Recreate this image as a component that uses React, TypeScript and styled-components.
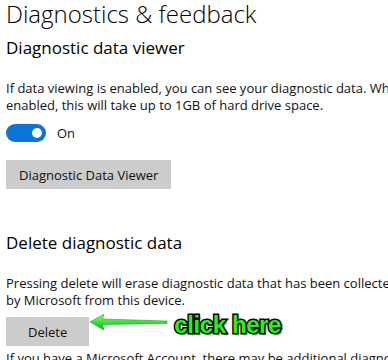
import React from "react";
import styled, { createGlobalStyle } from "styled-components";

const GlobalStyle = createGlobalStyle`
  html, body {
    margin: 0;
    overflow: hidden;
    background: #ffffff;
  }
  body {
    font-family: "Open Sans", "Noto Sans", sans-serif;
    color: #111111;
  }
`;

const Page = styled.div`
  display: flex;
  flex-flow: column nowrap;
  align-items: flex-start;
  padding-left: 6px;
  width: 388px;
  box-sizing: border-box;

  & > * {
    flex-shrink: 0;
  }
`;

const PageTitle = styled.h1`
  margin: 0;
  font-size: 24px;
  font-weight: 300;
  line-height: 28px;
  color: #000;
  white-space: nowrap;
`;

const SectionTitle = styled.h2<{ $top: number }>`
  margin: ${(p) => p.$top}px 0 0;
  font-size: 17px;
  font-weight: 400;
  line-height: 22px;
  color: #000;
  white-space: nowrap;
`;

const Paragraph = styled.p<{ $top: number }>`
  margin: ${(p) => p.$top}px 0 0;
  font-size: 13px;
  line-height: 17px;
  white-space: nowrap;
`;

const ToggleRow = styled.div`
  display: flex;
  flex-flow: row nowrap;
  align-items: center;
  gap: 11px;
  margin-top: 10px;
  font-size: 13px;
  line-height: 18px;
`;

const Toggle = styled.div`
  display: flex;
  align-items: center;
  justify-content: flex-end;
  width: 40px;
  height: 18px;
  padding: 0 4px;
  box-sizing: border-box;
  border-radius: 9px;
  background: #0a74d8;
`;

const Knob = styled.span`
  width: 10px;
  height: 10px;
  border-radius: 50%;
  background: #fff;
`;

const GreyButton = styled.button<{ $top: number; $pad: number }>`
  display: flex;
  align-items: center;
  flex-shrink: 0;
  box-sizing: border-box;
  margin: ${(p) => p.$top}px 0 0;
  height: 29px;
  padding: 0 ${(p) => p.$pad}px;
  border: none;
  background: #cccccc;
  font-family: inherit;
  font-size: 13px;
  color: #111;
  white-space: nowrap;
`;

const DeleteRow = styled.div`
  display: flex;
  flex-flow: row nowrap;
  align-items: flex-start;
  margin-top: 8px;
`;

const Callout = styled.div`
  display: flex;
  flex-flow: row nowrap;
  align-items: center;
  gap: 4px;
  margin-top: -6px;
  margin-left: 1px;
`;

const Arrow = styled.svg`
  margin-bottom: 6px;
  flex: none;
`;

const ClickHere = styled.span`
  font-family: "Liberation Sans", Arial, sans-serif;
  font-weight: 700;
  font-size: 24px;
  line-height: 28px;
  letter-spacing: -0.4px;
  color: #22f51a;
  -webkit-text-stroke: 3px #000;
  paint-order: stroke fill;
  text-shadow: 2px 2px 2px rgba(0, 0, 0, 0.55);
  white-space: nowrap;
`;

function GreenArrow() {
  return (
    <Arrow width="80" height="18" viewBox="0 0 80 18">
      <defs>
        <linearGradient id="arrowFill" x1="0" y1="0" x2="0" y2="1">
          <stop offset="0" stopColor="#8bff74" />
          <stop offset="0.5" stopColor="#33e833" />
          <stop offset="1" stopColor="#14ad14" />
        </linearGradient>
      </defs>
      <polygon
        points="0,9 14,1 12.5,6 77,8 77,10.5 12.5,11.5 14,17"
        fill="url(#arrowFill)"
        stroke="#129312"
        strokeWidth="0.5"
        strokeLinejoin="round"
      />
    </Arrow>
  );
}

export default function App() {
  return (
    <>
      <GlobalStyle />
      <Page>
        <PageTitle>Diagnostics &amp; feedback</PageTitle>
        <SectionTitle $top={9}>Diagnostic data viewer</SectionTitle>
        <Paragraph $top={21}>
          If data viewing is enabled, you can see your diagnostic data. While
          <br />
          enabled, this will take up to 1GB of hard drive space.
        </Paragraph>
        <ToggleRow>
          <Toggle>
            <Knob />
          </Toggle>
          On
        </ToggleRow>
        <GreyButton $top={18} $pad={13}>
          Diagnostic Data Viewer
        </GreyButton>
        <SectionTitle $top={43}>Delete diagnostic data</SectionTitle>
        <Paragraph $top={21}>
          Pressing delete will erase diagnostic data that has been collected
          <br />
          by Microsoft from this device.
        </Paragraph>
        <DeleteRow>
          <GreyButton $top={0} $pad={22}>
            Delete
          </GreyButton>
          <Callout>
            <GreenArrow />
            <ClickHere>click here</ClickHere>
          </Callout>
        </DeleteRow>
        <Paragraph $top={4}>
          If you have a Microsoft Account, there may be additional diagnostic
          data stored in the cloud.
        </Paragraph>
      </Page>
    </>
  );
}
